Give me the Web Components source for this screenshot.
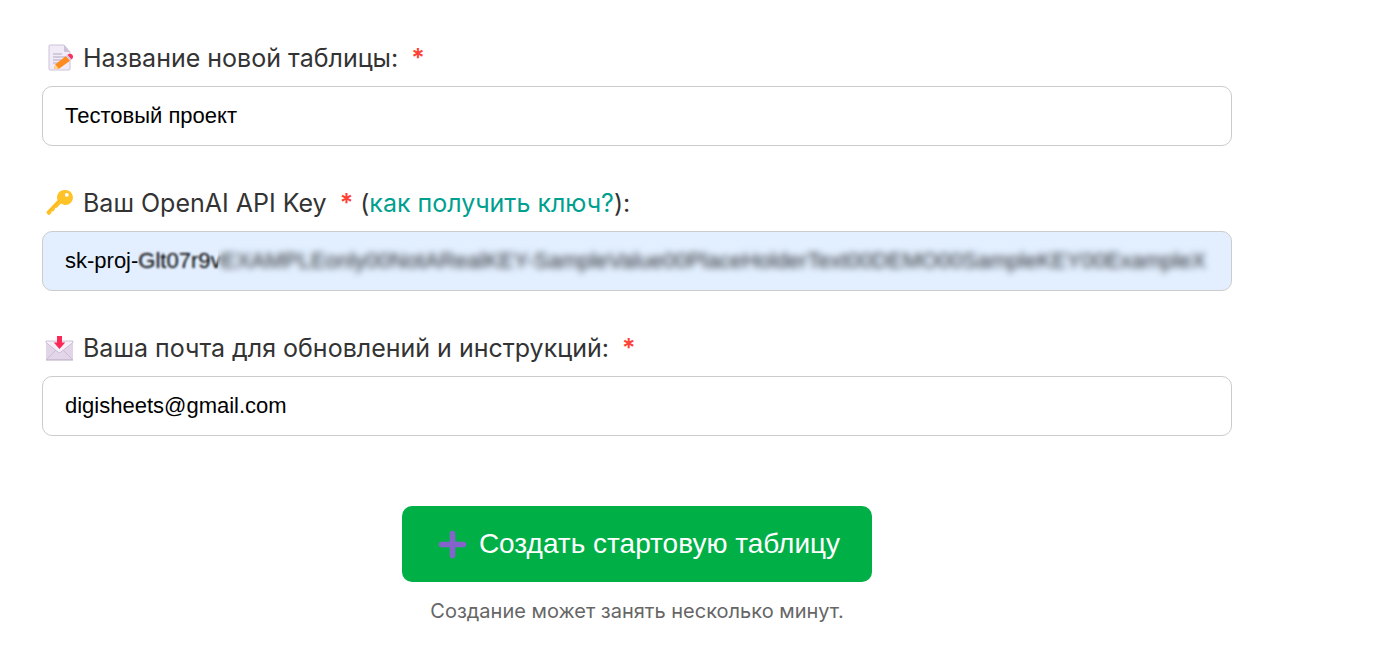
<!DOCTYPE html>
<html lang="ru">
<head>
<meta charset="utf-8">
<meta name="viewport" content="width=device-width, initial-scale=1">
<title>Новая таблица</title>
<style>
    body{
        margin: 0;
        background: #fff;
        color: #333;
        font-family: Inter, "Liberation Sans", sans-serif;
    }
</style>
</head>
<body>
<sheet-form>
    <form-field icon="memo" name="title" value="Тестовый проект">Название новой таблицы:</form-field>
    <form-field icon="key" name="key" value="sk-proj-Glt07r9vEXAMPLEonly00NotARealKEY-SampleValue00PlaceHolderText00DEMO00SampleKEY00ExampleX" secret>
        Ваш OpenAI API Key
        <span slot="after">(<help-link href="#key-help">как получить ключ?</help-link>):</span>
    </form-field>
    <form-field icon="mail" name="email" type="email" value="digisheets@gmail.com">Ваша почта для обновлений и инструкций:</form-field>
    <submit-button slot="action">Создать стартовую таблицу</submit-button>
    <span slot="note">Создание может занять несколько минут.</span>
</sheet-form>

<script>
const ICONS = {
    memo: `
        <path d="M5 1h14l6 7v17a1 1 0 0 1-1 1H5a1 1 0 0 1-1-1V2a1 1 0 0 1 1-1z" fill="#f1ebf7" stroke="#cdc2d8"/>
        <path d="M19 1v6a1 1 0 0 0 1 1h5z" fill="#cdc2d8"/>
        <path d="M8 10h9M8 13h13M8 16h11M8 19h8" stroke="#b3a7c0" fill="none"/>
        <path d="M9 25l1.200-4.500L21 12l4 4.800L14 24.800z" fill="#ff8b1f"/>
        <path d="M9 25l1.200-4.500 3.800 4.300z" fill="#ffd590"/>
        <path d="M21 12l1.500-1.200 4 4.800-1.500 1.200z" fill="#d8ccdf"/>
        <path d="M22.500 10.800l.8-.6c1.300-1 3-.6 4 .6 1 1.300 1 3-.1 4l-.7.800z" fill="#f8315f"/>`,
    key: `
        <path fill-rule="evenodd" fill="#ffc227" d="M19.500 1a7.500 7.500 0 0 0-7 10.200L2 22.300c-.6.700-.6 1.300-.2 1.900l.5.700c.8 1.200 2.200 1.300 3.100.3l1-1.100 0-1.600 1.700.1 1.800-2 0-1.600 1.600.1 4.600-4.500A7.500 7.500 0 1 0 19.500 1zm2.300 3a1.900 1.900 0 1 1 0 3.800 1.900 1.900 0 0 1 0-3.800z"/>
        <path d="M3 23.500L14.500 11.500" stroke="#f9b11c" stroke-width="1"/>`,
    mail: `
        <rect x="1" y="7" width="27" height="19" rx="1" fill="#e2d5e8"/>
        <path d="M1.500 25.500l10-10M27.500 25.500l-10-10" stroke="#cbbcd5" fill="none"/>
        <path d="M1 7h27v1.500L16 18c-1 .8-2 .8-3 0L1 8.500z" fill="#f4eff8" stroke="#c4b6cd" stroke-width=".8"/>
        <path d="M12 2h5v6.500h3.200L14.500 15 8.800 8.500H12z" fill="#fb2858"/>
        <path d="M1 26h27" stroke="#b5a5c0"/>`,
    plus: `
        <path d="M14.500 3.500v22M3.500 14.500h22" stroke="#8662cd" stroke-width="5.500" stroke-linecap="round"/>`
};

class EmojiIcon extends HTMLElement {
    constructor(){
        super();
        this.attachShadow({mode:'open'});
    }
    connectedCallback(){
        this.shadowRoot.innerHTML = `
        <style>
            :host{
                display: block;
                flex: none;
                width: 29px;
                height: 29px;
            }
            svg{
                display: block;
                width: 100%;
                height: 100%;
            }
        </style>
        <svg viewBox="0 0 29 29" fill="none" aria-hidden="true">${ICONS[this.getAttribute('name')]}</svg>
        `;
    }
}

class HelpLink extends HTMLElement {
    constructor(){
        super();
        this.attachShadow({mode:'open'});
    }
    connectedCallback(){
        this.shadowRoot.innerHTML = `<style>
            :host{
                display: inline;
            }
            a{
                color: #009f8f;
                text-decoration: none;
            }
            a:hover{
                text-decoration: underline;
            }
        </style><a href="${this.getAttribute('href')}"><slot></slot></a>`;
    }
}

class FormField extends HTMLElement {
    constructor(){
        super();
        this.attachShadow({mode:'open'});
    }
    getStyles(){
        return `
        <style>
            :host{
                display: flex;
                flex-direction: column;
                gap: 10px;
            }
            .caption{
                display: flex;
                align-items: center;
                gap: 9px;
                padding-left: 3px;
                font-size: 25px;
                line-height: 36px;
            }
            .star{
                color: #ff4136;
                font-weight: 600;
                margin-left: 6px;
            }
            .box{
                position: relative;
            }
            input{
                display: block;
                box-sizing: border-box;
                width: 100%;
                height: 60px;
                padding: 0 22px;
                border: 1px solid #ccc;
                border-radius: 10px;
                background: #fff;
                color: #000;
                font-family: "Liberation Sans", Arial, sans-serif;
                font-size: 22px;
                outline: none;
            }
            input:focus{
                border-color: #00b047;
            }
            :host([secret]) input{
                background: #e3efff;
            }
            /* hides the tail of the key, the start stays readable */
            .veil{
                position: absolute;
                inset: 10px 20px 10px 96px;
                pointer-events: none;
                backdrop-filter: blur(1px);
            }
            .veil.deep{
                left: 176px;
                background: rgba(227, 239, 255, .2);
                backdrop-filter: blur(3px);
            }
        </style>
        `;
    }
    connectedCallback(){
        const veil = this.hasAttribute('secret') ? '<div class="veil"></div><div class="veil deep"></div>' : '';
        this.shadowRoot.innerHTML = `
        ${this.getStyles()}
        <div class="caption">
            <emoji-icon name="${this.getAttribute('icon')}"></emoji-icon>
            <label for="field"><slot></slot> <span class="star">*</span> <slot name="after"></slot></label>
        </div>
        <div class="box">
            <input id="field" name="${this.getAttribute('name')}" type="${this.getAttribute('type') || 'text'}" value="${this.getAttribute('value')}" autocomplete="off" spellcheck="false" required>
            ${veil}
        </div>
        `;
    }
}

class SubmitButton extends HTMLElement {
    constructor(){
        super();
        this.attachShadow({mode:'open'});
    }
    connectedCallback(){
        this.shadowRoot.innerHTML = `
        <style>
            :host{
                display: block;
            }
            button{
                display: flex;
                align-items: center;
                gap: 12px;
                padding: 20px 32px 20px 36px;
                border: 0;
                border-radius: 10px;
                background: #00b047;
                color: #fff;
                font-family: "Liberation Sans", Arial, sans-serif;
                font-size: 28px;
                line-height: 36px;
                cursor: pointer;
            }
            button:hover{
                background: #00a042;
            }
        </style>
        <button type="button"><emoji-icon name="plus"></emoji-icon><slot></slot></button>
        `;
    }
}

class SheetForm extends HTMLElement {
    constructor(){
        super();
        this.attachShadow({mode:'open'});
    }
    connectedCallback(){
        this.shadowRoot.innerHTML = `
        <style>
            :host{
                display: block;
                padding: 40px 12% 32px 42px;
            }
            .fields{
                display: flex;
                flex-direction: column;
                gap: 39px;
            }
            .actions{
                display: flex;
                flex-direction: column;
                align-items: center;
                gap: 15px;
                margin-top: 70px;
            }
            .note{
                color: #666;
                font-size: 20px;
                line-height: 28px;
            }
        </style>
        <form>
            <div class="fields"><slot></slot></div>
            <div class="actions">
                <slot name="action"></slot>
                <div class="note"><slot name="note"></slot></div>
            </div>
        </form>
        `;
    }
}

customElements.define('emoji-icon', EmojiIcon);
customElements.define('help-link', HelpLink);
customElements.define('form-field', FormField);
customElements.define('submit-button', SubmitButton);
customElements.define('sheet-form', SheetForm);
</script>
</body>
</html>
